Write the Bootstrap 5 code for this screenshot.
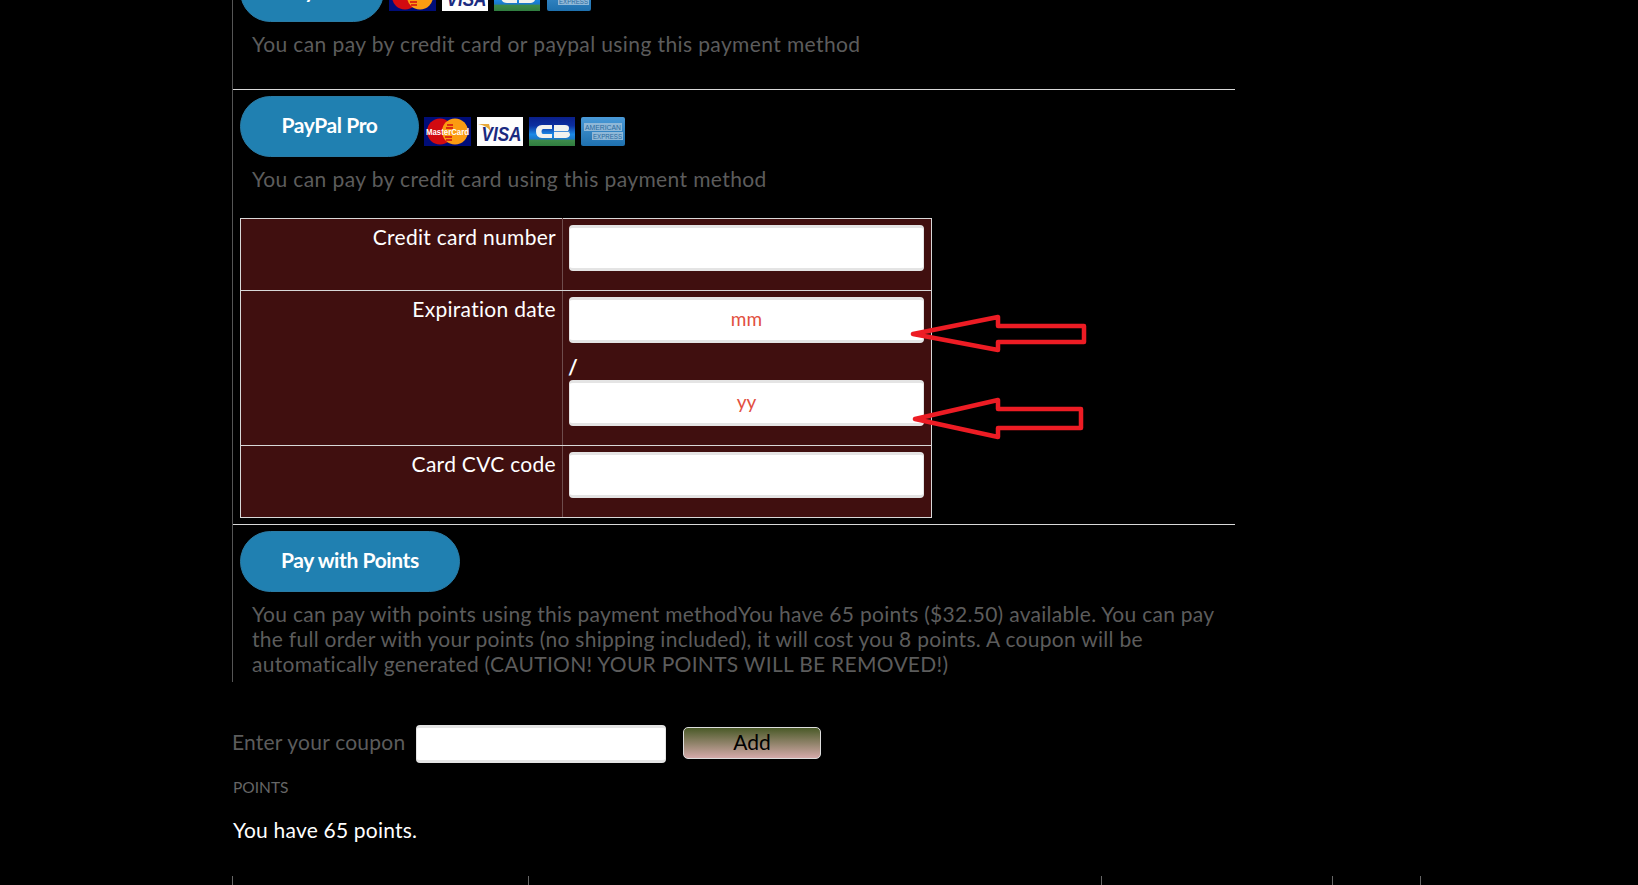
<!DOCTYPE html>
<html lang="en">
<head>
    <meta charset="UTF-8">
    <meta name="viewport" content="width=device-width, initial-scale=1.0">
    <title>Payment</title>
    <link href="https://cdn.jsdelivr.net/npm/bootstrap@5.3.3/dist/css/bootstrap.min.css" rel="stylesheet">
    <style>
        html, body { height: 885px; overflow: hidden; background: #000; }
        body { font-family: Lato, "Open Sans", sans-serif; font-size: 21px; color: #fff; position: relative; }
        .page-wrap { width: 1003px; margin: -39px 0 0 232px; }
        .methods { border-left: 1px solid #555; height: 721px; }
        .method-row { padding: 0 0 0 7px; }
        .method-row + .method-row { border-top: 1px solid #d8d8d8; padding-top: 6px; }
        .first-row { height: 128px; }
        .second-row { height: 435px; }
        .pay-btn { height: 61px; padding: 0 40px 4px; background: #2080b1; border: 1px solid #2a7ca6; border-radius: 31px; color: #fff; font-size: 21px; font-weight: 700; line-height: 54px; letter-spacing: -.4px; }
        .pay-btn:hover { background: #2080b1; color: #fff; border-color: #2a7ca6; }
        .first-row .pay-btn { padding: 0 41px 4px; }
        .second-row .pay-btn { padding: 0 40.5px 4px; }
        .cards { margin: 21px 0 0 5px; gap: 6px; }
        .cards svg { display: block; }
        .desc { margin: 9px 0 0 12px; color: #5c5c5c; line-height: 25px; letter-spacing: .39px; width: 975px; }
        .desc-long { letter-spacing: .28px; }
        .pay-table { width: 692px; margin: 27px 0 0; border-collapse: collapse; background: #400f0f; }
        .pay-table td { padding: 6px; border: 1px solid #d8d8d8; vertical-align: top; line-height: 24px; letter-spacing: .29px; }
        .pay-table td:first-child { width: 322px; text-align: right; border-right-color: #6e4c4c; }
        .pay-table td:last-child { border-left-color: #6e4c4c; }
        .row-one { height: 72px; }
        .row-two { height: 155px; }
        .field { display: block; width: 355px; height: 46px; padding: 0 0 4px; background: #fff; border: 0; border-top: 3px solid #e4e4e4; border-bottom: 3px solid #e4e4e4; border-left: 1px solid #e4e4e4; border-right: 1px solid #e4e4e4; border-radius: 4px; text-align: center; font-size: 19px; outline: 0; }
        .field::placeholder { color: #e2503f; opacity: 1; }
        .slash { line-height: 24px; margin: 12px 0 0 -1px; height: 25px; font-weight: 700; }
        .coupon-row { margin-top: 43px; height: 38px; }
        .coupon-label { color: #5c5c5c; width: 184px; letter-spacing: .22px; padding-bottom: 5px; }
        .coupon-input { width: 250px; height: 38px; }
        .add-btn { width: 138px; height: 32px; margin: 0 0 2px 17px; padding: 0 0 3px; border: 1px solid #ddd; border-radius: 5px; background: linear-gradient(#4a5a28, #d4aaaa); color: #000; font-size: 21px; line-height: 26px; }
        .add-btn:hover { border-color: #ddd; color: #000; background: linear-gradient(#4a5a28, #d4aaaa); }
        .points-head { margin-top: 14px; color: #666; font-size: 15.5px; line-height: 20px; padding-left: 1px; }
        .points-text { margin-top: 20px; line-height: 25px; letter-spacing: .2px; padding-left: 1px; }
        .foot-cols { position: absolute; left: 232px; top: 876px; width: 1189px; height: 9px; border-left: 1px solid #666; }
        .foot-cols i { position: absolute; top: 0; height: 9px; width: 1px; background: #666; }
        .arrows { position: absolute; left: 0; top: 0; pointer-events: none; }
    </style>
</head>
<body>
    <svg width="0" height="0" class="d-block">
        <defs>
            <linearGradient id="cbGrad" x1="0" y1="0" x2="0" y2="1">
                <stop offset="0" stop-color="#0a1f8a"/><stop offset=".3" stop-color="#0c2fa0"/><stop offset=".6" stop-color="#1c8ae6"/><stop offset=".76" stop-color="#1a78c8"/><stop offset=".8" stop-color="#3d8a4a"/><stop offset="1" stop-color="#2f7d3f"/>
            </linearGradient>
            <linearGradient id="amGrad" x1="0" y1="0" x2="0" y2="1">
                <stop offset="0" stop-color="#4a9ad8"/><stop offset="1" stop-color="#1e70ae"/>
            </linearGradient>
            <symbol id="mc" viewBox="0 0 47 29">
                <rect width="47" height="29" fill="#000d78"/>
                <circle cx="16" cy="14.500" r="13" fill="#d20a10"/>
                <circle cx="31" cy="14.500" r="13" fill="#fb9c12"/>
                <path d="M23 8h6M22 11h7M21 20h7M22 23h6" stroke="#d20a10" stroke-width="1.500"/>
                <text x="23.500" y="17.500" text-anchor="middle" font-family="Liberation Sans, sans-serif" font-size="9" font-weight="700" fill="#fff" textLength="43" lengthAdjust="spacingAndGlyphs">MasterCard</text>
            </symbol>
            <symbol id="visa" viewBox="0 0 46 29">
                <rect width="46" height="29" fill="#fdfdfd"/>
                <path d="M1 7h11l2 8q-3-6-13-8z" fill="#e8a93a"/>
                <text x="24.500" y="24" text-anchor="middle" font-family="Liberation Sans, sans-serif" font-size="21" font-weight="700" font-style="italic" fill="#1a2a80" textLength="40" lengthAdjust="spacingAndGlyphs">VISA</text>
            </symbol>
            <symbol id="cb" viewBox="0 0 46 29">
                <rect width="46" height="29" fill="url(#cbGrad)"/>
                <path d="M13 8h10v4h-9q-1.500 0-1.500 2.500t1.500 2.500h9v4H13q-6 0-6-6.500T13 8z" fill="#f2f2ee"/>
                <path d="M25 8h11q4 0 4 3t-1.500 3.500q2.500.5 2.500 3T37 21H25z" fill="#f2f2ee"/>
                <path d="M25 14h16v1H25z" fill="#4a90d8"/>
            </symbol>
            <symbol id="amex" viewBox="0 0 44 29">
                <rect width="44" height="29" rx="2" fill="url(#amGrad)"/>
                <rect x="3" y="6" width="38" height="8" fill="#8fb8d8"/>
                <rect x="11" y="15" width="31" height="8" fill="#8fb8d8"/>
                <text x="22" y="12.500" text-anchor="middle" font-family="Liberation Sans, sans-serif" font-size="6.500" fill="#2a6a9e" textLength="36" lengthAdjust="spacingAndGlyphs">AMERICAN</text>
                <text x="26.500" y="21.500" text-anchor="middle" font-family="Liberation Sans, sans-serif" font-size="6.500" fill="#2a6a9e" textLength="29" lengthAdjust="spacingAndGlyphs">EXPRESS</text>
            </symbol>
        </defs>
    </svg>

    <div class="page-wrap">
        <div class="methods">
            <div class="method-row first-row">
                <div class="d-flex align-items-start">
                    <button class="btn pay-btn">PayPal</button>
                    <div class="d-flex cards">
                        <svg width="47" height="29"><use href="#mc"/></svg>
                        <svg width="46" height="29"><use href="#visa"/></svg>
                        <svg width="46" height="29"><use href="#cb"/></svg>
                        <svg width="46" height="29"><use href="#amex"/></svg>
                    </div>
                </div>
                <p class="desc">You can pay by credit card or paypal using this payment method</p>
            </div>

            <div class="method-row second-row">
                <div class="d-flex align-items-start">
                    <button class="btn pay-btn">PayPal Pro</button>
                    <div class="d-flex cards">
                        <svg width="47" height="29"><use href="#mc"/></svg>
                        <svg width="46" height="29"><use href="#visa"/></svg>
                        <svg width="46" height="29"><use href="#cb"/></svg>
                        <svg width="44" height="29"><use href="#amex"/></svg>
                    </div>
                </div>
                <p class="desc">You can pay by credit card using this payment method</p>
                <table class="pay-table">
                    <tr class="row-one">
                        <td>Credit card number</td>
                        <td><input type="text" class="field"></td>
                    </tr>
                    <tr class="row-two">
                        <td>Expiration date</td>
                        <td>
                            <input type="text" class="field" placeholder="mm">
                            <div class="slash">/</div>
                            <input type="text" class="field" placeholder="yy">
                        </td>
                    </tr>
                    <tr class="row-one">
                        <td>Card CVC code</td>
                        <td><input type="text" class="field"></td>
                    </tr>
                </table>
            </div>

            <div class="method-row">
                <button class="btn pay-btn">Pay with Points</button>
                <p class="desc desc-long">You can pay with points using this payment methodYou have 65 points ($32.50) available. You can pay the full order with your points (no shipping included), it will cost you 8 points. A coupon will be automatically generated (CAUTION! YOUR POINTS WILL BE REMOVED!)</p>
            </div>
        </div>

        <div class="d-flex align-items-center coupon-row">
            <span class="coupon-label">Enter your coupon</span>
            <input type="text" class="field coupon-input">
            <button class="btn add-btn">Add</button>
        </div>
        <div class="points-head">POINTS</div>
        <p class="points-text mb-0">You have 65 points.</p>
    </div>

    <div class="foot-cols">
        <i style="left: 295px"></i>
        <i style="left: 868px"></i>
        <i style="left: 1099px"></i>
        <i style="left: 1187px"></i>
    </div>

    <svg class="arrows" width="1638" height="885" fill="none" stroke="#ed1c24" stroke-width="4.500" stroke-linejoin="round">
        <path d="M913 334 998 317V326H1084V342H998V350Z"/>
        <path d="M915 419 998 400V409H1081V428H998V437Z"/>
    </svg>

    <script src="https://cdn.jsdelivr.net/npm/bootstrap@5.3.3/dist/js/bootstrap.bundle.min.js"></script>
</body>
</html>
